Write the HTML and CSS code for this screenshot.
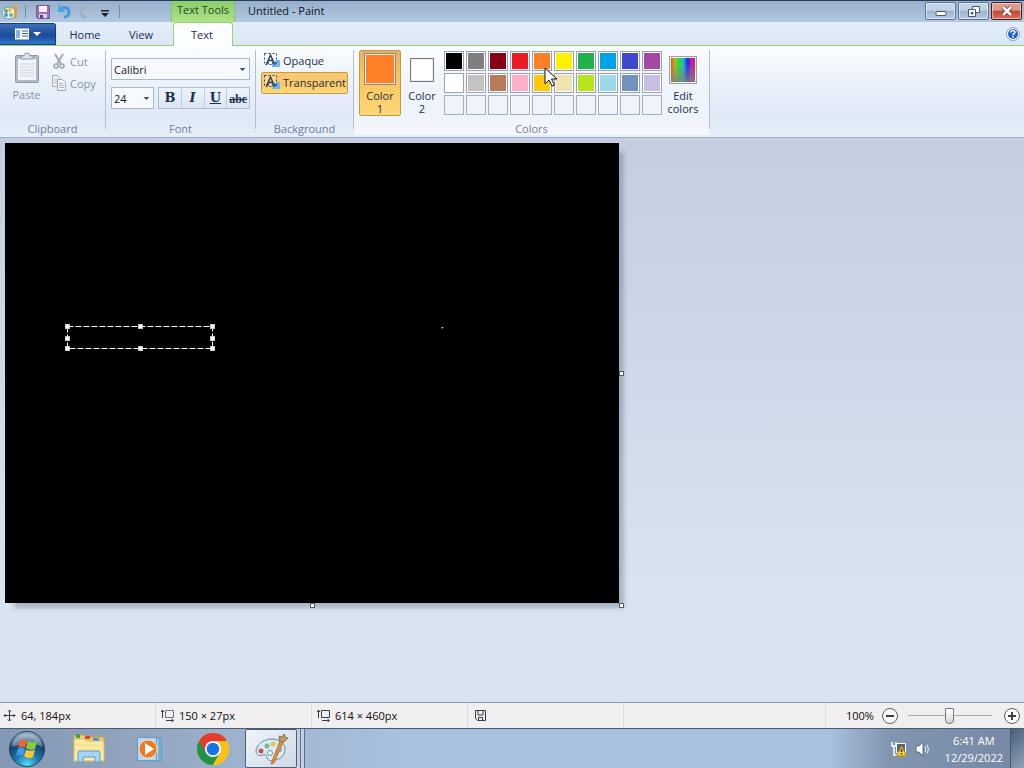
FILE: index.html
```
<!DOCTYPE html>
<html lang="en">
<head>
  <meta charset="UTF-8">
  <meta name="viewport" content="width=device-width, initial-scale=1.0">
  <title>Untitled - Paint</title>
  <link rel="stylesheet" href="styles.css">
</head>
<body>
  <header class="titlebar">
    <div class="quick">
      <svg class="app-icon" width="18" height="18" viewBox="0 0 18 18"><ellipse cx="8" cy="10" rx="7" ry="6" fill="#e4f2fa" stroke="#6b9cb4"/><circle cx="5" cy="8" r="2" fill="#5fb053"/><circle cx="9" cy="7" r="2" fill="#e8c13a"/><circle cx="5" cy="12" r="2" fill="#5a94d2"/><circle cx="10" cy="12" r="2" fill="#73b56a"/><path d="M13 1h3v14h-3z" fill="#e39a45"/></svg>
      <span class="quick-line"></span>
      <button class="quick-btn" aria-label="Save"><svg width="14" height="14" viewBox="0 0 14 14"><path d="M.5.5h13v13H2L.5 12z" fill="#9a6fb6" stroke="#7a549c"/><path d="M3 1h8v6H3z" fill="#f4effa"/><path d="M3 9h8v4H3z" fill="#d9cfe6"/><path d="M4 10h3v3H4z" fill="#5b3d80"/></svg></button>
      <button class="quick-btn" aria-label="Undo"><svg width="16" height="15" viewBox="0 0 16 15"><path d="M4 5c5-3 9-1 9 3 0 3-2 5-5 5" fill="none" stroke="#3f9bdc" stroke-width="3"/><path d="M2 0v8h8z" fill="#4ba6e4"/></svg></button>
      <button class="quick-btn" aria-label="Redo"><svg width="16" height="15" viewBox="0 0 16 15"><path d="M12 5C7 2 3 4 3 8c0 3 2 5 5 5" fill="none" stroke="#9fb1c6" stroke-width="3"/><path d="M14 0v8H6z" fill="#a9bacd"/></svg></button>
      <button class="quick-btn quick-more" aria-label="Customize"><svg width="8" height="7" viewBox="0 0 8 7"><path d="M0 0h8v1.500H0zM0 3h8L4 7z" fill="#1c2430"/></svg></button>
      <span class="quick-line"></span>
    </div>
    <div class="context-title">Text Tools</div>
    <h1 class="title">Untitled - Paint</h1>
    <div class="window-btns">
      <button class="win-btn" aria-label="Minimize"><svg width="12" height="10" viewBox="0 0 12 10"><rect x="1" y="5.500" width="10" height="4" rx="1" fill="#fff" stroke="#4c5768"/></svg></button>
      <button class="win-btn" aria-label="Restore"><svg width="12" height="11" viewBox="0 0 12 11"><path d="M4.500.500h7v6h-7z" fill="#fff" stroke="#4c5768"/><path d="M.500 3.500h7v7h-7z" fill="#fff" stroke="#4c5768"/><path d="M3 6.500h2v1.500H3z" fill="#9aadc6" stroke="#4c5768"/></svg></button>
      <button class="win-btn win-close" aria-label="Close"><svg width="12" height="10" viewBox="0 0 12 10"><path d="M2 1l8 8M10 1L2 9" stroke="#6b2a2a" stroke-width="4"/><path d="M2 1l8 8M10 1L2 9" stroke="#fff" stroke-width="2.500"/></svg></button>
    </div>
  </header>

  <nav class="tabs">
    <button class="file-btn" aria-label="Paint menu">
      <svg width="26" height="12" viewBox="0 0 26 12"><path d="M0 .500h14v11H0z" fill="#fff"/><path d="M1 2h4v8H1z" fill="#8db2df"/><path d="M7 3h6M7 5.500h6M7 8h6" stroke="#2b5fa8"/><path d="M18 4h8l-4 4z" fill="#fff"/></svg>
    </button>
    <button class="tab">Home</button>
    <button class="tab">View</button>
    <button class="tab active">Text</button>
    <button class="help" aria-label="Help"><svg width="14" height="14" viewBox="0 0 14 14"><circle cx="7" cy="7" r="6.500" fill="#fff" stroke="#7d9fd0"/><circle cx="7" cy="7" r="5" fill="#2461c8"/><path d="M5 5.500c0-2.500 4-2.500 4-.2C9 6.800 7 6.600 7 8.300M7 9.300v1.500" fill="none" stroke="#fff" stroke-width="1.500"/></svg></button>
  </nav>

  <section class="ribbon">
    <div class="group">
      <div class="group-body clipboard">
        <button class="paste" disabled>
          <svg width="26" height="32" viewBox="0 0 26 32"><rect x="1.500" y="3.500" width="23" height="27" rx="1" fill="#b1bac8" stroke="#8f99aa"/><path d="M4 7h18v21H4z" fill="#f0f4f9"/><path d="M6 12h14M6 15h14M6 18h14M6 21h14M6 24h14" stroke="#ccd4e0"/><path d="M7 7V4h3c0-4 6-4 6 0h3v3z" fill="#dce2eb" stroke="#8f99aa"/></svg>
          <span>Paste</span>
        </button>
        <div class="stack">
          <button class="row-btn" disabled><svg width="16" height="16" viewBox="0 0 16 16"><path d="M4 1l6 10M12 1L6 11" stroke="#a0aaba" stroke-width="2"/><circle cx="5" cy="13" r="2" fill="none" stroke="#98a2b3" stroke-width="1.500"/><circle cx="11" cy="13" r="2" fill="none" stroke="#98a2b3" stroke-width="1.500"/></svg>Cut</button>
          <button class="row-btn" disabled><svg width="16" height="16" viewBox="0 0 16 16"><path d="M1.500.500h5l2 2v9h-7z" fill="#f1f5fa" stroke="#9eabbd"/><path d="M3 4h4M3 6h4M3 8h3" stroke="#b8c3d2"/><path d="M6.500 4.500h5l3 3v8h-8z" fill="#f1f5fa" stroke="#9eabbd"/><path d="M8 8.500h4M8 10.500h5M8 12.500h5" stroke="#aab8ca"/></svg>Copy</button>
        </div>
      </div>
      <div class="group-name">Clipboard</div>
    </div>

    <div class="group">
      <div class="group-body font">
        <select class="combo" aria-label="Font family"><option>Calibri</option></select>
        <div class="font-row">
          <select class="combo size" aria-label="Font size"><option>24</option></select>
          <div class="styles">
            <button aria-label="Bold"><b>B</b></button>
            <button aria-label="Italic"><i>I</i></button>
            <button aria-label="Underline"><u>U</u></button>
            <button aria-label="Strikethrough"><s>abc</s></button>
          </div>
        </div>
      </div>
      <div class="group-name">Font</div>
    </div>

    <div class="group">
      <div class="group-body background">
        <button class="bg-btn"><svg width="17" height="16" viewBox="0 0 17 16"><path d="M8 8h8v7H8z" fill="#6fb3f5"/><path d="M.500 1.500h12v11H.500z" fill="#f3f7fc" fill-opacity=".7" stroke="#3a4558" stroke-dasharray="2 2"/><path d="M3 11l3.500-8 3.500 8M4.500 8.500h4M2 11h3M8 11h4" fill="none" stroke="#2c3e5c" stroke-width="1.500"/></svg>Opaque</button>
        <button class="bg-btn active"><svg width="17" height="16" viewBox="0 0 17 16"><path d="M8 8h8v7H8z" fill="#6fb3f5"/><path d="M.500 1.500h12v11H.500z" fill="#f3f7fc" fill-opacity=".3" stroke="#3a4558" stroke-dasharray="2 2"/><path d="M3 11l3.500-8 3.500 8M4.500 8.500h4M2 11h3M8 11h4" fill="none" stroke="#2c3e5c" stroke-width="1.500"/></svg>Transparent</button>
      </div>
      <div class="group-name">Background</div>
    </div>

    <div class="group">
      <div class="group-body colors">
        <button class="color-btn active"><span class="well"><span class="chip orange"></span></span>Color<br>1</button>
        <button class="color-btn"><span class="well"><span class="chip small"></span></span>Color<br>2</button>
        <div class="palette">
          <button class="black" aria-label="Black"></button>
          <button class="gray50" aria-label="Gray 50%"></button>
          <button class="dark-red" aria-label="Dark red"></button>
          <button class="red" aria-label="Red"></button>
          <button class="orange" aria-label="Orange"></button>
          <button class="yellow" aria-label="Yellow"></button>
          <button class="green" aria-label="Green"></button>
          <button class="turquoise" aria-label="Turquoise"></button>
          <button class="indigo" aria-label="Indigo"></button>
          <button class="purple" aria-label="Purple"></button>
          <button class="white" aria-label="White"></button>
          <button class="gray25" aria-label="Gray 25%"></button>
          <button class="brown" aria-label="Brown"></button>
          <button class="rose" aria-label="Rose"></button>
          <button class="gold" aria-label="Gold"></button>
          <button class="light-yellow" aria-label="Light yellow"></button>
          <button class="lime" aria-label="Lime"></button>
          <button class="light-turquoise" aria-label="Light turquoise"></button>
          <button class="blue-gray" aria-label="Blue-gray"></button>
          <button class="lavender" aria-label="Lavender"></button>
          <button class="empty" aria-label="Custom 1"></button>
          <button class="empty" aria-label="Custom 2"></button>
          <button class="empty" aria-label="Custom 3"></button>
          <button class="empty" aria-label="Custom 4"></button>
          <button class="empty" aria-label="Custom 5"></button>
          <button class="empty" aria-label="Custom 6"></button>
          <button class="empty" aria-label="Custom 7"></button>
          <button class="empty" aria-label="Custom 8"></button>
          <button class="empty" aria-label="Custom 9"></button>
          <button class="empty" aria-label="Custom 10"></button>
          <svg class="cursor" width="15" height="21" viewBox="0 0 15 21"><path d="M1 1v16l4-4 3 6 2.500-1-3-6h5.500z" fill="#fff" stroke="#111"/></svg>
        </div>
        <button class="color-btn"><span class="well"><span class="chip rainbow"></span></span>Edit<br>colors</button>
      </div>
      <div class="group-name">Colors</div>
    </div>
  </section>

  <main class="workspace">
    <div class="canvas">
      <div class="selection">
        <svg class="marquee" width="100%" height="100%"><rect x="0.500" y="0.500" width="145" height="22" fill="none" stroke="#fff" stroke-dasharray="6 2"/></svg>
        <i class="grip nw"></i><i class="grip n"></i><i class="grip ne"></i>
        <i class="grip w"></i><i class="grip e"></i>
        <i class="grip sw"></i><i class="grip s"></i><i class="grip se"></i>
      </div>
      <svg class="mark" width="3" height="3" viewBox="0 0 3 3"><path d="M0 0h3L1 2z" fill="#aaa"/></svg>
      <i class="handle right"></i>
      <i class="handle bottom"></i>
      <i class="handle corner"></i>
    </div>
  </main>

  <footer class="status">
    <div class="cell"><svg width="13" height="13" viewBox="0 0 13 13"><path d="M6.500 1v11M1 6.500h11M5 2.500L6.500 1 8 2.500M5 10.500L6.500 12 8 10.500M2.500 5L1 6.500 2.500 8M10.500 5L12 6.500 10.500 8" fill="none" stroke="#333c4c"/></svg>64, 184px</div>
    <div class="cell"><svg width="13" height="13" viewBox="0 0 13 13"><path d="M1.500 9V1M0 3l1.500-2L3 3M5 11.500h7M10.500 10l2 1.500-2 1.500" fill="none" stroke="#333c4c"/><path d="M4.500 1.500h8v7h-8z" fill="none" stroke="#333c4c" stroke-dasharray="2 1"/></svg>150 × 27px</div>
    <div class="cell"><svg width="13" height="13" viewBox="0 0 13 13"><path d="M1.500 9V1M0 3l1.500-2L3 3M5 11.500h7M10.500 10l2 1.500-2 1.500M4.500 1.500h8v7h-8z" fill="none" stroke="#333c4c"/></svg>614 × 460px</div>
    <div class="cell save"><svg width="11" height="11" viewBox="0 0 11 11"><path d="M.500.500h10v10h-8l-2-2zM3 1v4h5V1M3.500 10V7.500h4V10" fill="none" stroke="#333c4c"/></svg></div>
    <div class="cell rest"></div>
    <div class="zoom">
      <label for="zoom">100%</label>
      <button class="zoom-btn" aria-label="Zoom out"><svg width="16" height="16" viewBox="0 0 16 16"><circle cx="8" cy="8" r="7.500" fill="#f8f8f8" stroke="#5e6064"/><path d="M4 8h8" stroke="#3c3e42" stroke-width="2"/></svg></button>
      <input id="zoom" class="slider" type="range" min="0" max="100" value="50">
      <button class="zoom-btn" aria-label="Zoom in"><svg width="16" height="16" viewBox="0 0 16 16"><circle cx="8" cy="8" r="7.500" fill="#f8f8f8" stroke="#5e6064"/><path d="M4 8h8M8 4v8" stroke="#3c3e42" stroke-width="2"/></svg></button>
    </div>
  </footer>

  <div class="taskbar">
    <button class="task start" aria-label="Start">
      <svg width="38" height="38" viewBox="0 0 38 38">
        <defs>
          <radialGradient id="orb" cx=".5" cy=".95" r=".9"><stop offset="0" stop-color="#4fe0f4"/><stop offset=".4" stop-color="#1b75ab"/><stop offset=".75" stop-color="#174068"/><stop offset="1" stop-color="#8fb0c8"/></radialGradient>
        </defs>
        <circle cx="19" cy="19" r="17.500" fill="url(#orb)" stroke="#27405e"/>
        <path d="M4 17c1-17 29-17 30 0-9-5-20-4-30 0z" fill="#fff" opacity=".35"/>
        <path d="M12 11c2-2 5-2 7 0l-2 7c-2-2-5-1-7 0z" fill="#f0642c"/>
        <path d="M20 11c3 2 6 2 9 0l-2 8c-3 1-6 1-9-1z" fill="#8ccb3c"/>
        <path d="M10 19c2-2 5-2 7 0l-2 7c-2-2-5-1-7 0z" fill="#3e9be6"/>
        <path d="M18 20c3 1 6 1 9 0l-2 7c-3 2-6 1-9-1z" fill="#fbc52f"/>
      </svg>
    </button>
    <button class="task" aria-label="Windows Explorer">
      <svg width="34" height="32" viewBox="0 0 34 32">
        <path d="M2 5V2h10l2 2h18v23H2z" fill="#e9cf72" stroke="#c3a24a"/>
        <path d="M4 1h4v4H4z" fill="#3ca24b"/><path d="M13 3h5v3h-5z" fill="#d6492c"/><path d="M21 5h6v3h-6z" fill="#4b8ed6"/>
        <path d="M2 6h10l2 2h18v20H2z" fill="#f9eaa6" stroke="#d9bf68"/>
        <path d="M3 12h28M3 17h28" stroke="#f2dc8a"/>
        <path d="M6 29v-9q0-2 2-2h18q2 0 2 2v9h-5v-5H11v5z" fill="#a6d6f3" stroke="#5c9dcb"/>
      </svg>
    </button>
    <button class="task" aria-label="Windows Media Player">
      <svg width="30" height="28" viewBox="0 0 30 28">
        <path d="M21 4h4v22h-4z" fill="#8bc5e6" stroke="#5296bd"/>
        <path d="M19 3h4v23h-4z" fill="#a8d8f0" stroke="#5296bd"/>
        <path d="M1.500 2.500h19v23h-19z" fill="#b5d8ef" stroke="#639cc2"/>
        <circle cx="12" cy="14" r="9" fill="#ee7a22" stroke="#fbd7b2"/>
        <path d="M9 8l9 6-9 6z" fill="#fff"/>
      </svg>
    </button>
    <button class="task" aria-label="Google Chrome">
      <svg width="32" height="32" viewBox="0 0 32 32">
        <circle cx="16" cy="16" r="16" fill="#fbc116"/>
        <path d="M16 16L2.100 8A16 16 0 0 0 16 32l7-12z" fill="#229342"/>
        <path d="M2.100 8A16 16 0 0 1 29.900 8H16L9 20z" fill="#e33b2e"/>
        <path d="M16 8h13.900A16 16 0 0 1 16 32l7-12z" fill="#fbc116"/>
        <circle cx="16" cy="16" r="8" fill="#fff"/><circle cx="16" cy="16" r="6.300" fill="#1a73e8"/>
      </svg>
    </button>
    <button class="task paint" aria-label="Paint">
      <svg width="34" height="32" viewBox="0 0 34 32">
        <path d="M18 6C9 6 2 12 2 19c1 4 4 4 7 3s4 1 4 3c1 3 5 3 8 2 6-1 10-5 10-11 0-6-6-10-13-10z" fill="#d7eaf5" stroke="#5f8fa8"/>
        <circle cx="7" cy="18" r="2.500" fill="#d94a4e"/><circle cx="13" cy="13" r="2.500" fill="#72bf86"/><circle cx="19" cy="11" r="2.500" fill="#e8c74b"/><circle cx="26" cy="17" r="2" fill="#6cb0dc"/><circle cx="16" cy="20" r="2.500" fill="#fff" stroke="#5f8fa8"/>
        <path d="M26 8l3 1-9 21-3 1z" fill="#e89143" stroke="#bd6a24"/>
        <path d="M26 9l-1-6 3 1 2-3 1 3 3 1-4 4z" fill="#bf9b62" stroke="#8f7244"/>
      </svg>
    </button>
    <span class="stack-edge"></span><span class="stack-edge"></span>
    <div class="tray">
      <button class="tray-btn" aria-label="Network"><svg width="17" height="16" viewBox="0 0 17 16"><path d="M5.500 2.500h9v9h-9z" fill="#56677c" stroke="#fff"/><path d="M1 1v4h4V1M3 5v9h5" fill="none" stroke="#fff" stroke-width="1.500"/><path d="M10.500 5l5 10h-10z" fill="#ffd52b" stroke="#b08d12"/><path d="M10.500 8v3M10.500 12v1.500" stroke="#333" stroke-width="1.500"/></svg></button>
      <button class="tray-btn" aria-label="Volume"><svg width="17" height="16" viewBox="0 0 17 16"><path d="M1 5h3l4-4v14l-4-4H1z" fill="#fff" stroke="#5d6c81"/><path d="M10 5q2 3 0 6M12 3.500q3 4.500 0 9" fill="none" stroke="#e9eff7"/></svg></button>
      <div class="clock"><span>6:41 AM</span><span>12/29/2022</span></div>
      <button class="desktop" aria-label="Show desktop"></button>
    </div>
  </div>
</body>
</html>
```
FILE: styles.css
```
*{
  box-sizing: border-box;
}
body{
  margin: 0;
  height: 100vh;
  display: flex;
  flex-direction: column;
  overflow: hidden;
  font: 11px/13px "Open Sans", "Noto Sans", sans-serif;
  color: #1e2f4d;
}
button, select, input{
  margin: 0;
  padding: 0;
  border: none;
  background: none;
  font: inherit;
  color: inherit;
}
svg{
  display: block;
  flex: none;
}

/* title bar */
.titlebar{
  display: flex;
  height: 22px;
  flex: none;
  border-top: 1px solid #263c5c;
  background: linear-gradient(#98afca, #b3c9e2);
}
.quick{
  display: flex;
  align-items: center;
  gap: 6px;
  width: 171px;
  padding-left: 1px;
}
.quick-line{
  width: 1px;
  height: 13px;
  background: #7489a5;
}
.app-icon + .quick-line{
  margin-right: 4px;
}
.quick-more{
  margin-left: 1px;
  padding-top: 3px;
}
.quick-more + .quick-line{
  margin-left: 4px;
}
.context-title{
  width: 64px;
  padding-top: 2px;
  text-align: center;
  border: solid #86c465;
  border-width: 0 1px;
  background: linear-gradient(#8bce68, #aee386);
  color: #24472b;
}
.title{
  flex: 1;
  margin: 0;
  padding: 3px 0 0 13px;
  font-size: 11px;
  font-weight: 400;
  color: #0a1220;
}
.window-btns{
  display: flex;
  gap: 2px;
  padding: 1px 2px 0 0;
}
.win-btn{
  display: flex;
  align-items: center;
  justify-content: center;
  width: 31px;
  height: 18px;
  border: 1px solid #5d7594;
  border-radius: 2px;
  box-shadow: inset 0 0 0 1px rgba(255,255,255,.5);
  background: linear-gradient(#c3d3e6 45%, #9db3ce 50%, #b6cae1);
}
.win-close{
  border-color: #4a1c22;
  background: linear-gradient(#dd9a8d 45%, #c04433 50%, #d6705b);
}

/* tabs */
.tabs{
  display: flex;
  align-items: flex-end;
  height: 24px;
  flex: none;
  border-bottom: 1px solid #93d46f;
  background: linear-gradient(#e3edf9, #dce7f5);
}
.file-btn{
  display: flex;
  align-items: center;
  justify-content: center;
  width: 56px;
  height: 22px;
  border: 1px solid #173d7c;
  border-left: none;
  border-radius: 0 3px 0 0;
  background: linear-gradient(#3d72b8, #1f4f9c 50%, #1c4da0 60%, #2e76c9);
}
.tab{
  width: 56px;
  height: 22px;
}
.tab:nth-child(2){
  margin-left: 1px;
}
.tab.active{
  width: 60px;
  height: 24px;
  margin: 0 0 -1px 4px;
  padding-right: 2px;
  border: 1px solid #93d46f;
  border-bottom: none;
  border-radius: 3px 3px 0 0;
  background: #fbfdff;
}
.help{
  margin: 0 4px 4px auto;
}

/* ribbon */
.ribbon{
  display: flex;
  flex: none;
  height: 92px;
  padding: 4px 0 2px;
  border-bottom: 1px solid #9fb0c6;
  background: linear-gradient(#fbfdff, #e8f0fa 45%, #dfe8f5 80%, #e6eff9);
}
.group{
  display: flex;
  flex-direction: column;
  justify-content: space-between;
  padding: 0 6px 0 5px;
  background: linear-gradient(#b3bfd0, #b3bfd0) right top / 1px 79px no-repeat;
}
.group:last-child{
  background: linear-gradient(#b3bfd0, #b3bfd0) right top / 1px 79px no-repeat, linear-gradient(rgba(255,255,255,.1), rgba(255,255,255,.6));
}
.group-body{
  display: flex;
}
.group-name{
  text-align: center;
  color: #71809a;
}
.clipboard{
  width: 95px;
  color: #8993a5;
}
.clipboard button{
  color: inherit;
}
.paste{
  display: flex;
  flex-direction: column;
  align-items: center;
  gap: 4px;
  width: 43px;
  padding-top: 2px;
}
.stack{
  display: flex;
  flex-direction: column;
  gap: 6px;
  padding-top: 3px;
}
.row-btn{
  display: flex;
  align-items: center;
  gap: 3px;
  height: 16px;
  padding-left: 3px;
}
.font{
  flex-direction: column;
  gap: 7px;
  width: 139px;
  padding-top: 8px;
}
.combo{
  appearance: none;
  width: 100%;
  height: 22px;
  padding-left: 2px;
  border: 1px solid #a9b8cc;
  border-radius: 0;
  color: #16181c;
  background: linear-gradient(#4b5566, #4b5566) right 4px top 9px / 5px 1px no-repeat, linear-gradient(#4b5566, #4b5566) right 5px top 10px / 3px 1px no-repeat, linear-gradient(#4b5566, #4b5566) right 6px top 11px / 1px 1px no-repeat, #f6f9fd;
}
.combo.size{
  width: 43px;
}
.font-row{
  display: flex;
  justify-content: space-between;
}
.styles{
  display: flex;
  width: 92px;
  border: 1px solid #b0bdcf;
}
.styles button{
  flex: 1;
  height: 20px;
  border-right: 1px solid #c3cedd;
  background: linear-gradient(#eef4fc, #dae5f3);
  font: bold 13px/16px "DejaVu Serif", serif;
}
.styles button:last-child{
  border-right: none;
  padding-top: 2px;
  font: bold 12px/16px "Liberation Serif", serif;
}
.background{
  flex-direction: column;
  width: 87px;
}
.bg-btn{
  display: flex;
  align-items: center;
  gap: 2px;
  height: 22px;
  padding: 0 0 2px 2px;
  border: 1px solid transparent;
  white-space: nowrap;
}
.bg-btn.active{
  border-color: #c19a4e;
  border-radius: 2px;
  background: linear-gradient(#f9c775, #fbca62 60%, #fddc7d);
}
.color-btn{
  width: 42px;
  height: 66px;
  padding-bottom: 2px;
  border: 1px solid transparent;
  border-radius: 2px;
  text-align: center;
}
.color-btn.active{
  border-color: #c19a4e;
  background: linear-gradient(#e4b263, #fbc55e 40%, #fdd878);
}
.well{
  display: flex;
  align-items: center;
  justify-content: center;
  height: 38px;
}
.chip{
  width: 32px;
  height: 32px;
  border: 1px solid #8e887f;
  padding: 1px;
  background: #ff7f27 content-box;
  box-shadow: inset 0 0 0 1px #f7ece0;
}
.chip.orange{
  margin-bottom: 2px;
}
.chip.small{
  width: 24px;
  height: 24px;
  background: #fff;
  border-color: #737a86;
}
.chip.rainbow{
  width: 28px;
  height: 28px;
  border-color: #9aa0aa;
  background: linear-gradient(transparent 20%, rgba(128,128,128,.8)) content-box, linear-gradient(90deg, #d25a20, #b8b320 15%, #20e030 35%, #20c0d0 50%, #2020e8 70%, #c020c0 85%, #e02040) content-box;
}
.palette{
  position: relative;
  display: grid;
  grid-template-columns: repeat(10, 20px);
  grid-auto-rows: 20px;
  gap: 2px;
  margin: 1px 0 0 1px;
}
.palette button{
  border: 1px solid #9ca3ae;
  padding: 1px;
  background-clip: content-box;
  box-shadow: inset 0 0 0 1px #fff;
}
.palette .black{ background-color: #000; }
.palette .gray50{ background-color: #7f7f7f; }
.palette .dark-red{ background-color: #880015; }
.palette .red{ background-color: #ed1c24; }
.palette .orange{ background-color: #ff7f27; }
.palette .yellow{ background-color: #fff200; }
.palette .green{ background-color: #22b14c; }
.palette .turquoise{ background-color: #00a2e8; }
.palette .indigo{ background-color: #3f48cc; }
.palette .purple{ background-color: #a349a4; }
.palette .white{ background-color: #fff; }
.palette .gray25{ background-color: #c3c3c3; }
.palette .brown{ background-color: #b97a57; }
.palette .rose{ background-color: #ffaec9; }
.palette .gold{ background-color: #ffc90e; }
.palette .light-yellow{ background-color: #efe4b0; }
.palette .lime{ background-color: #b5e61d; }
.palette .light-turquoise{ background-color: #99d9ea; }
.palette .blue-gray{ background-color: #7092be; }
.palette .lavender{ background-color: #c8bfe7; }
.palette .empty{
  border-color: #a4afbf;
  box-shadow: none;
}
.cursor{
  position: absolute;
  left: 100px;
  top: 16px;
}

/* workspace */
.workspace{
  flex: 1;
  min-height: 0;
  padding: 5px;
  background: linear-gradient(#c4cee0, #d0d9e9 45%, #d9e4f1 85%);
}
.canvas{
  position: relative;
  width: 614px;
  height: 460px;
  background: #000;
  box-shadow: 7px 7px 4px -2px rgba(100,110,130,.4);
}
.selection{
  position: absolute;
  left: 62px;
  top: 183px;
  width: 146px;
  height: 23px;
}
.grip, .handle{
  position: absolute;
  width: 5px;
  height: 5px;
  background: #fff;
  border: 1px solid #555b66;
}
.grip{
  border-color: #c8c8c8;
}
.nw, .w, .sw{ left: -2px; }
.n, .s{ left: 71px; }
.ne, .e, .se{ right: -2px; }
.nw, .n, .ne{ top: -2px; }
.w, .e{ top: 10px; }
.sw, .s, .se{ bottom: -2px; }
.mark{
  position: absolute;
  left: 436px;
  top: 184px;
}
.right, .corner{ right: -5px; }
.right{ top: 228px; }
.bottom, .corner{ bottom: -5px; }
.bottom{ left: 305px; }

/* status bar */
.status{
  display: flex;
  flex: none;
  height: 27px;
  border-top: 1px solid #8b9bae;
  border-bottom: 1px solid #4c5a6e;
  background: #f1eeef;
  color: #111;
}
.cell{
  display: flex;
  align-items: center;
  gap: 5px;
  width: 156px;
  padding-left: 3px;
  border-right: 1px solid #dcdce0;
}
.cell + .cell{
  padding-left: 5px;
}
.cell.save{
  padding-left: 7px;
}
.cell.rest{
  flex: 1;
}
.zoom{
  display: flex;
  align-items: center;
  gap: 8px;
  width: 198px;
  padding: 0 4px 0 20px;
}
.zoom-btn{
  width: 16px;
  height: 16px;
}
.slider{
  flex: 1;
  min-width: 0;
  height: 18px;
  margin: 0 4px 0 2px;
  appearance: none;
  background: linear-gradient(#a8a8ac, #a8a8ac) center / 100% 1px no-repeat;
}
.slider::-webkit-slider-thumb{
  appearance: none;
  width: 9px;
  height: 16px;
  border: 1px solid #74777d;
  border-radius: 1px 1px 4px 4px;
  background: linear-gradient(#fff, #d5d6da);
}

/* taskbar */
.taskbar{
  display: flex;
  flex: none;
  height: 39px;
  background: linear-gradient(90deg, #8398b4, #91a3bd 12%, #a2b8d4 28%, #a7c1de 40%, #a7c1de 81%, #8194b0 87%, #7588a5);
}
.task{
  display: flex;
  align-items: center;
  justify-content: center;
  width: 62px;
}
.task.start{
  width: 58px;
  padding-right: 4px;
}
.task.paint{
  width: 52px;
  margin-left: 1px;
  border: 1px solid #4d5f79;
  border-radius: 2px;
  background: linear-gradient(135deg, #f0f4f8, #cfd9e5);
}
.stack-edge{
  width: 4px;
  border-right: 1px solid #5b6d87;
  background: #c2d0e0;
}
.tray{
  display: flex;
  align-items: center;
  gap: 7px;
  margin-left: auto;
  color: #fff;
}
.clock{
  display: flex;
  flex-direction: column;
  align-items: center;
  line-height: 17px;
  padding-left: 6px;
}
.desktop{
  align-self: stretch;
  width: 14px;
  border-left: 1px solid #45556e;
  background: linear-gradient(135deg, #4b5f7a, #8fa1b8);
}
```
